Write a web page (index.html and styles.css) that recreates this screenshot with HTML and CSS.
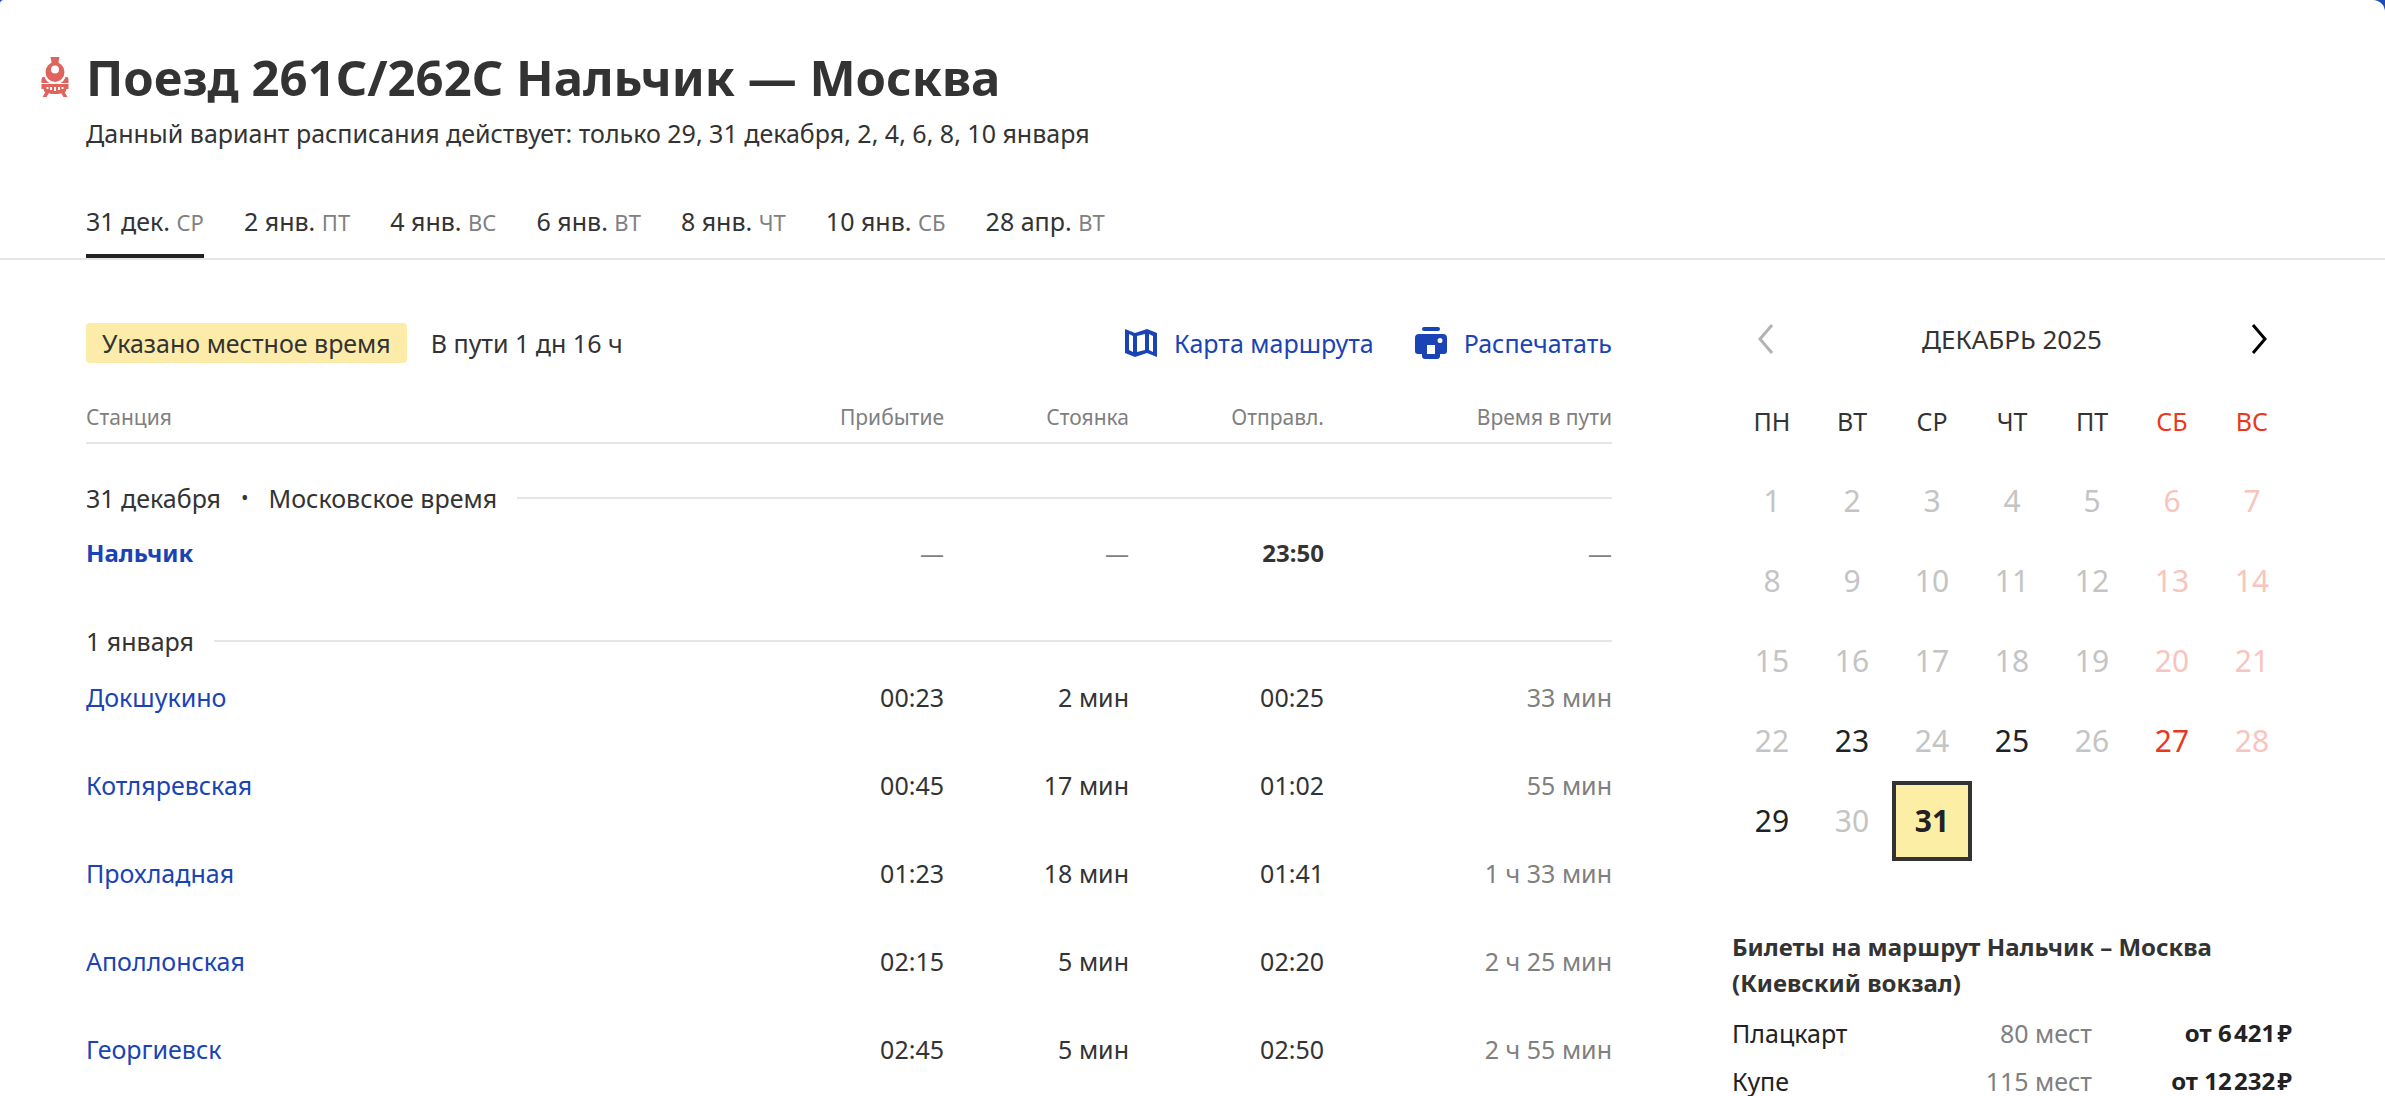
FILE: index.html
```html
<!DOCTYPE html>
<html lang="ru">
<head>
    <meta charset="UTF-8">
    <meta name="viewport" content="width=device-width, initial-scale=1.0">
    <title>Поезд 261С/262С Нальчик — Москва</title>
    <link rel="stylesheet" href="styles.css">
</head>
<body>
<div class="page">
    <header class="header">
        <div class="title-row">
            <svg class="train-icon" viewBox="0 0 28 40" aria-hidden="true">
                <path d="M10 0h9l-1 5v3h-7V5z"/>
                <path fill-rule="evenodd" d="M14.500 5a9.500 10 0 1 0 0 20a9.500 10 0 1 0 0-20zM14.500 8.500a4 4 0 1 1 0 8a4 4 0 1 1 0-8z"/>
                <path d="M2 20h2c1 3 3 5 5 6H1v-4zM27 20h-2c-1 3-3 5-5 6h8v-4z"/>
                <path fill-rule="evenodd" d="M1 27h27v5h-2l-1 3-7 2h-7l-7-2-1-3H1zM6 30v2h2v-2zM9.500 30v3h2v-3zM13.500 30v4h2v-4zM17.500 30v3h2v-3zM21 30v2h2v-2z"/>
                <path d="M5 35h4l-3 5H2zM24 35h-4l3 5h4z"/>
            </svg>
            <h1>Поезд 261С/262С Нальчик — Москва</h1>
        </div>
        <p class="subtitle">Данный вариант расписания действует: только 29, 31 декабря, 2, 4, 6, 8, 10 января</p>
        <nav class="tabs">
            <a class="tab tab-active" href="#">31 дек. <span>СР</span></a>
            <a class="tab" href="#">2 янв. <span>ПТ</span></a>
            <a class="tab" href="#">4 янв. <span>ВС</span></a>
            <a class="tab" href="#">6 янв. <span>ВТ</span></a>
            <a class="tab" href="#">8 янв. <span>ЧТ</span></a>
            <a class="tab" href="#">10 янв. <span>СБ</span></a>
            <a class="tab" href="#">28 апр. <span>ВТ</span></a>
        </nav>
    </header>

    <div class="content">
        <main class="schedule">
            <div class="toolbar">
                <span class="badge">Указано местное время</span>
                <span>В пути 1 дн 16 ч</span>
                <div class="actions">
                    <a class="action" href="#">
                        <svg viewBox="0 0 32 32" aria-hidden="true">
                            <path fill-rule="evenodd" d="M0 2l10 4 12-4 10 4v24l-10-4-12 4-10-4zM4 7v16l4 2V9zM12 9v16l8-2V7zM24 7v16l4 2V9z"/>
                        </svg>
                        Карта маршрута
                    </a>
                    <a class="action" href="#">
                        <svg viewBox="0 0 32 32" aria-hidden="true">
                            <rect x="7" y="0" width="18" height="4" rx="2"/>
                            <path fill-rule="evenodd" d="M4 7h24a4 4 0 0 1 4 4v13a3 3 0 0 1-3 3h-4v2a3 3 0 0 1-3 3H10a3 3 0 0 1-3-3v-2H3a3 3 0 0 1-3-3V11a4 4 0 0 1 4-4zM12 18v9h8v-9zM25 11a2.500 2.500 0 1 0 0 5a2.500 2.500 0 1 0 0-5z"/>
                        </svg>
                        Распечатать
                    </a>
                </div>
            </div>

            <table class="stations">
                <thead>
                    <tr>
                        <th class="col-station">Станция</th>
                        <th class="col-arrival">Прибытие</th>
                        <th class="col-stop">Стоянка</th>
                        <th class="col-departure">Отправл.</th>
                        <th class="col-duration">Время в пути</th>
                    </tr>
                </thead>
                <tbody>
                    <tr class="group">
                        <th colspan="5"><div class="group-line">31 декабря<span class="dot">•</span>Московское время</div></th>
                    </tr>
                    <tr class="terminal">
                        <td><a href="#">Нальчик</a></td>
                        <td class="muted">—</td>
                        <td class="muted">—</td>
                        <td>23:50</td>
                        <td class="muted">—</td>
                    </tr>
                    <tr class="group">
                        <th colspan="5"><div class="group-line">1 января</div></th>
                    </tr>
                    <tr>
                        <td><a href="#">Докшукино</a></td>
                        <td>00:23</td>
                        <td>2 мин</td>
                        <td>00:25</td>
                        <td class="muted">33 мин</td>
                    </tr>
                    <tr>
                        <td><a href="#">Котляревская</a></td>
                        <td>00:45</td>
                        <td>17 мин</td>
                        <td>01:02</td>
                        <td class="muted">55 мин</td>
                    </tr>
                    <tr>
                        <td><a href="#">Прохладная</a></td>
                        <td>01:23</td>
                        <td>18 мин</td>
                        <td>01:41</td>
                        <td class="muted">1 ч 33 мин</td>
                    </tr>
                    <tr>
                        <td><a href="#">Аполлонская</a></td>
                        <td>02:15</td>
                        <td>5 мин</td>
                        <td>02:20</td>
                        <td class="muted">2 ч 25 мин</td>
                    </tr>
                    <tr>
                        <td><a href="#">Георгиевск</a></td>
                        <td>02:45</td>
                        <td>5 мин</td>
                        <td>02:50</td>
                        <td class="muted">2 ч 55 мин</td>
                    </tr>
                </tbody>
            </table>
        </main>

        <aside class="sidebar">
            <div class="month">
                <button type="button" disabled aria-label="Предыдущий месяц">
                    <svg viewBox="0 0 18 30" aria-hidden="true"><path d="M16 1L4 15l12 14"/></svg>
                </button>
                <span>ДЕКАБРЬ 2025</span>
                <button type="button" aria-label="Следующий месяц">
                    <svg viewBox="0 0 18 30" aria-hidden="true"><path d="M3 1l12 14L3 29"/></svg>
                </button>
            </div>
            <table class="calendar">
                <thead>
                    <tr><th>ПН</th><th>ВТ</th><th>СР</th><th>ЧТ</th><th>ПТ</th><th>СБ</th><th>ВС</th></tr>
                </thead>
                <tbody>
                    <tr><td>1</td><td>2</td><td>3</td><td>4</td><td>5</td><td>6</td><td>7</td></tr>
                    <tr><td>8</td><td>9</td><td>10</td><td>11</td><td>12</td><td>13</td><td>14</td></tr>
                    <tr><td>15</td><td>16</td><td>17</td><td>18</td><td>19</td><td>20</td><td>21</td></tr>
                    <tr><td>22</td><td><a href="#">23</a></td><td>24</td><td><a href="#">25</a></td><td>26</td><td><a href="#">27</a></td><td>28</td></tr>
                    <tr><td><a href="#">29</a></td><td>30</td><td class="selected">31</td><td></td><td></td><td></td><td></td></tr>
                </tbody>
            </table>

            <section class="tickets">
                <h2>Билеты на маршрут Нальчик – Москва (Киевский вокзал)</h2>
                <table>
                    <tr>
                        <td>Плацкарт</td>
                        <td class="seats">80 мест</td>
                        <td class="price">от 6&#8202;421&#8202;₽</td>
                    </tr>
                    <tr>
                        <td>Купе</td>
                        <td class="seats">115 мест</td>
                        <td class="price">от 12&#8202;232&#8202;₽</td>
                    </tr>
                </table>
            </section>
        </aside>
    </div>
</div>
</body>
</html>
```

FILE: styles.css
```css
* {
    box-sizing: border-box;
}

body {
    margin: 0;
    background-color: #1d4bb8;
    color: #333;
    font-family: "Noto Sans", "Open Sans", sans-serif;
    font-size: 25px;
    line-height: 36px;
}

a {
    color: #1a43b5;
    text-decoration: none;
}

.page {
    min-height: 100vh;
    background-color: #fff;
    border-radius: 4px 12px 0 0;
}

/* Шапка */
.header {
    padding: 42px 86px 0;
    border-bottom: 2px solid #e6e6e6;
}

.title-row {
    display: flex;
    align-items: center;
    gap: 17px;
    margin-left: -46px;
}

.train-icon {
    width: 29px;
    height: 40px;
    fill: #e0635d;
}

h1 {
    margin: 0;
    font-size: 49px;
    line-height: 70px;
}

.subtitle {
    margin: 3px 0 0;
}

.tabs {
    display: flex;
    gap: 40px;
    margin-top: 52px;
}

.tab {
    padding-bottom: 14px;
    border-bottom: 4px solid transparent;
    color: #333;
}

.tab span {
    color: #808080;
    font-size: 22px;
}

.tab-active {
    border-bottom-color: #222;
}

.content {
    display: flex;
    gap: 120px;
    padding: 63px 93px 0 86px;
}

/* Расписание */
.schedule {
    flex: 1;
}

.toolbar {
    display: flex;
    align-items: center;
    gap: 24px;
}

.badge {
    padding: 2px 16px;
    border-radius: 4px;
    background-color: #fdebaa;
}

.actions {
    display: flex;
    gap: 40px;
    margin-left: auto;
}

.action {
    display: flex;
    align-items: center;
    gap: 16px;
}

.action svg {
    width: 34px;
    height: 32px;
    fill: #1a43b5;
}

.stations {
    width: 100%;
    margin-top: 36px;
    border-collapse: collapse;
    table-layout: fixed;
}

.stations th,
.stations td {
    padding: 0;
    font-weight: normal;
    text-align: right;
}

.stations th:first-child,
.stations td:first-child {
    text-align: left;
}

.stations thead th {
    padding-bottom: 7px;
    border-bottom: 2px solid #e6e6e6;
    color: #808080;
    font-size: 21px;
}

.col-arrival {
    width: 214px;
}

.col-stop {
    width: 185px;
}

.col-departure {
    width: 195px;
}

.col-duration {
    width: 288px;
}

.stations td {
    height: 88px;
    padding-bottom: 16px;
}

.stations .group th {
    height: 40px;
}

.stations thead + tbody .group:first-child th {
    height: 74px;
    padding-top: 34px;
}

.group-line {
    display: flex;
    align-items: center;
}

.group-line::after {
    content: "";
    flex: 1;
    height: 2px;
    margin-left: 20px;
    background-color: #e6e6e6;
}

.dot {
    margin: 0 20px;
    font-size: 20px;
}

.stations .terminal td {
    height: 104px;
    padding-bottom: 32px;
    font-size: 24px;
    font-weight: bold;
}

.stations .muted,
.stations .terminal .muted {
    color: #808080;
    font-weight: normal;
}

/* Календарь */
.sidebar {
    width: 560px;
}

.month {
    display: flex;
    align-items: center;
    justify-content: space-between;
    height: 32px;
    padding: 0 24px;
    font-size: 26px;
}

.month button {
    display: flex;
    padding: 0;
    border: 0;
    background: none;
    cursor: pointer;
}

.month svg {
    width: 18px;
    height: 30px;
    fill: none;
    stroke: #000;
    stroke-width: 3;
}

.month button:disabled svg {
    stroke: #b3b3b3;
}

.calendar {
    width: 100%;
    margin-top: 26px;
    border-collapse: collapse;
    table-layout: fixed;
}

.calendar th,
.calendar td {
    height: 80px;
    padding: 0;
    text-align: center;
}

.calendar th {
    font-size: 25px;
    font-weight: normal;
}

.calendar td {
    color: #c4c4c4;
    font-size: 30px;
}

.calendar td a {
    color: #222;
}

.calendar th:nth-child(n+6),
.calendar td:nth-child(n+6) a {
    color: #e8391d;
}

.calendar td:nth-child(n+6) {
    color: #f9c4bd;
}

.calendar .selected {
    background-color: #fdeea6;
    box-shadow: inset 0 0 0 4px #333;
    color: #222;
    font-weight: bold;
}

/* Билеты */
.tickets {
    margin-top: 68px;
}

.tickets h2 {
    margin: 0 0 8px;
    font-size: 24px;
}

.tickets table {
    width: 100%;
    border-collapse: collapse;
    color: #222;
}

.tickets td {
    height: 48px;
    padding: 0;
}

.tickets .seats {
    color: #808080;
    text-align: right;
}

.tickets .price {
    width: 200px;
    font-size: 24px;
    font-weight: bold;
    text-align: right;
}
```
